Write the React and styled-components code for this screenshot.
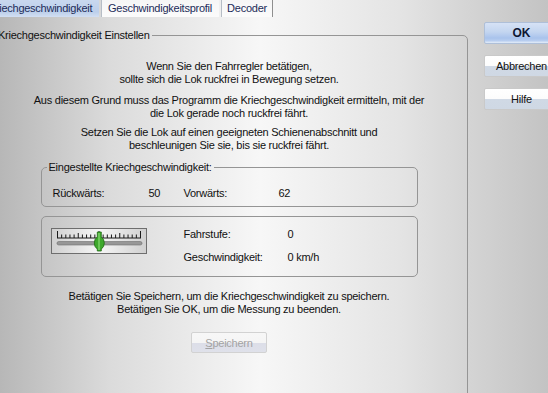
import React from "react"
import styled, { createGlobalStyle } from "styled-components"

const GlobalStyle = createGlobalStyle`
  html, body {
    margin: 0;
    padding: 0;
  }
  body {
    font-family: "Liberation Sans", Arial, sans-serif;
    font-size: 11px;
    letter-spacing: -0.25px;
    color: #111;
  }
`

const Dialog = styled.div`
  width: 548px;
  height: 393px;
  overflow: hidden;
  display: flex;
  background: linear-gradient(
    90deg,
    #b7b7b7 0px,
    #dbdbdb 110px,
    #f7f7f7 260px,
    #e4e4e4 400px,
    #d4d4d4 470px,
    #c3c3c3 548px
  );
`

const Main = styled.div`
  flex: none;
  width: 486px;
  margin-left: -18px;
  display: flex;
  flex-direction: column;
`

const TabStrip = styled.div`
  display: flex;
  gap: 2px;
  height: 17px;
`

const Tab = styled.div`
  width: ${(p) => p.$w}px;
  height: 17px;
  line-height: 16px;
  text-align: center;
  color: #1c2b58;
  white-space: nowrap;
  box-sizing: border-box;
  background: ${(p) =>
    p.$active
      ? "linear-gradient(#c9d8ef, #bccfeb 70%, #d3dff2)"
      : "linear-gradient(#f6f6f6, #fbfbfb)"};
  border-left: 1px solid ${(p) => (p.$active ? "transparent" : "#b6bdc6")};
  border-right: 1px solid ${(p) => (p.$edge ? "#8f8f8f" : "transparent")};
`

const Panel = styled.div`
  padding-left: 8px;
`

const Group = styled.fieldset`
  margin: ${(p) => p.$margin || "0"};
  padding: ${(p) => p.$pad || "0"};
  width: ${(p) => p.$w}px;
  height: ${(p) => (p.$h ? `${p.$h}px` : "auto")};
  box-sizing: border-box;
  border: 1px solid #959595;
  border-radius: 5px;
  min-inline-size: 0;
`

const Legend = styled.legend`
  margin-left: 5px;
  padding: 0 2px;
  line-height: 13px;
`

const Para = styled.p`
  margin: 0 0 ${(p) => p.$after || 0}px;
  line-height: 13px;
  text-align: center;
`

const Content = styled.div`
  padding-top: ${(p) => p.$top}px;
`

const Values = styled.div`
  display: grid;
  grid-template-columns: 96px 35px 95px auto;
  line-height: 13px;
  padding: 13px 0 6px 11px;
`

const SliderRow = styled.div`
  display: flex;
  align-items: flex-start;
`

const SliderFrame = styled.div`
  width: 96px;
  height: 26px;
  box-sizing: border-box;
  border: 1px solid #6e6e6e;
  background: linear-gradient(90deg, #d0d0d0, #f6f6f6 50%, #d0d0d0);
`

const Info = styled.div`
  display: grid;
  grid-template-columns: 104px auto;
  row-gap: 10px;
  line-height: 13px;
  margin-left: 37px;
`

const Center = styled.div`
  display: flex;
  justify-content: center;
`

const Button = styled.button`
  width: ${(p) => p.$w || 75}px;
  height: ${(p) => p.$h || 22}px;
  padding: 0;
  font-family: "Liberation Sans", Arial, sans-serif;
  font-size: ${(p) => (p.$primary ? "12px" : "11px")};
  font-weight: ${(p) => (p.$primary ? "bold" : "normal")};
  letter-spacing: ${(p) => (p.$primary ? "0" : "-0.25px")};
  color: ${(p) => (p.disabled ? "#a3a3a3" : p.$primary ? "#0d1733" : "#111")};
  border: 1px solid ${(p) => (p.$primary ? "#aebfd8" : p.disabled ? "#d2d2d2" : "#c9c9c9")};
  border-radius: 2px;
  background: ${(p) =>
    p.$primary
      ? "linear-gradient(#d6e2f5 0%, #c3d5f0 45%, #a9c3ec 75%, #b7cdef 88%, #e4edf9 100%)"
      : p.disabled
      ? "linear-gradient(#f7f7f7 0%, #f5f5f5 50%, #dcdee8 52%, #dfe1ea 100%)"
      : "linear-gradient(#ffffff 0%, #fcfcfc 48%, #d0d9e5 52%, #cfd8e4 100%)"};
  u {
    text-decoration: underline;
  }
`

const Side = styled.div`
  flex: none;
  margin-left: 16px;
  padding-top: 22px;
  display: flex;
  flex-direction: column;
  gap: 11px;
`

const Slider = () => {
  const ticks = []
  for (let i = 0; i <= 20; i++) {
    const x = 5.5 + i * 4.15
    const top = i % 10 === 0 ? 2 : i % 5 === 0 ? 4 : 5.5
    ticks.push(<line key={i} x1={x} y1={top} x2={x} y2={9} stroke="#1a1a1a" strokeWidth="1" />)
  }
  return (
    <SliderFrame>
      <svg width="94" height="24" viewBox="0 0 94 24">
        {ticks}
        <line x1="5" y1="9" x2="89" y2="9" stroke="#1a1a1a" strokeWidth="1" />
        <rect x="5" y="12.5" width="85" height="3.5" rx="1.7" fill="#979797" stroke="#6f6f6f" strokeWidth="0.6" />
        <path
          d="M45.3 3 h4 v5 q3 2 3 6 q0 4 -3 6 v2 h-4 v-2 q-3 -2 -3 -6 q0 -4 3 -6 z"
          fill="#3ea82c"
          stroke="#1f6a14"
          strokeWidth="0.8"
        />
        <rect x="46.3" y="4" width="1.4" height="17" fill="#8fe07a" opacity="0.8" />
      </svg>
    </SliderFrame>
  )
}

export default function App() {
  return (
    <Dialog>
      <GlobalStyle />
      <Main>
        <TabStrip>
          <Tab $w={117} $active>Kriechgeschwindigkeit</Tab>
          <Tab $w={118}>Geschwindigkeitsprofil</Tab>
          <Tab $w={52} $edge>Decoder</Tab>
        </TabStrip>
        <Panel>
          <Group $w={478} $h={420} $margin="12px 0 0">
            <Legend>Kriechgeschwindigkeit Einstellen</Legend>
            <Content $top={18}>
              <Para $after={8}>
                Wenn Sie den Fahrregler betätigen,
                <br />
                sollte sich die Lok ruckfrei in Bewegung setzen.
              </Para>
              <Para $after={6}>
                Aus diesem Grund muss das Programm die Kriechgeschwindigkeit ermitteln, mit der
                <br />
                die Lok gerade noch ruckfrei fährt.
              </Para>
              <Para $after={9}>
                Setzen Sie die Lok auf einen geeigneten Schienenabschnitt und
                <br />
                beschleunigen Sie sie, bis sie ruckfrei fährt.
              </Para>
              <Group $w={377} $margin="0 auto">
                <Legend>Eingestellte Kriechgeschwindigkeit:</Legend>
                <Values>
                  <span>Rückwärts:</span>
                  <span>50</span>
                  <span>Vorwärts:</span>
                  <span>62</span>
                </Values>
              </Group>
              <Group $w={377} $margin="9px auto 0" $pad="11px 9px 12px">
                <SliderRow>
                  <Slider />
                  <Info>
                    <span>Fahrstufe:</span>
                    <span>0</span>
                    <span>Geschwindigkeit:</span>
                    <span>0 km/h</span>
                  </Info>
                </SliderRow>
              </Group>
              <Content $top={13}>
                <Para $after={16}>
                  Betätigen Sie Speichern, um die Kriechgeschwindigkeit zu speichern.
                  <br />
                  Betätigen Sie OK, um die Messung zu beenden.
                </Para>
              </Content>
              <Center>
                <Button $w={76} $h={21} disabled>
                  <u>S</u>peichern
                </Button>
              </Center>
            </Content>
          </Group>
        </Panel>
      </Main>
      <Side>
        <Button $primary>OK</Button>
        <Button>Abbrechen</Button>
        <Button>Hilfe</Button>
      </Side>
    </Dialog>
  )
}
